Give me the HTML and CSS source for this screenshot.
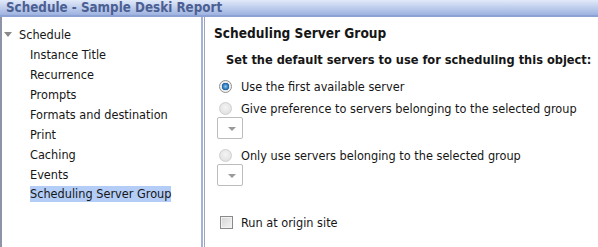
FILE: index.html
```html
<!DOCTYPE html>
<html>
<head>
<meta charset="utf-8">
<link rel="stylesheet" href="styles.css">
</head>
<body>
<div class="titlebar">Schedule - Sample Deski Report</div>
<div class="main">
  <div class="tree">
    <div class="tree-root"><span class="caret"></span><span>Schedule</span></div>
    <div class="tree-item">Instance Title</div>
    <div class="tree-item">Recurrence</div>
    <div class="tree-item">Prompts</div>
    <div class="tree-item">Formats and destination</div>
    <div class="tree-item">Print</div>
    <div class="tree-item">Caching</div>
    <div class="tree-item">Events</div>
    <div class="tree-item"><span class="selected">Scheduling Server Group</span></div>
  </div>
  <div class="content">
    <div class="heading">Scheduling Server Group</div>
    <div class="subheading">Set the default servers to use for scheduling this object:</div>
    <div class="option first"><span class="radio checked"></span><span>Use the first available server</span></div>
    <div class="option"><span class="radio"></span><span>Give preference to servers belonging to the selected group</span></div>
    <div class="select"><span class="arrow"></span></div>
    <div class="option third"><span class="radio"></span><span>Only use servers belonging to the selected group</span></div>
    <div class="select"><span class="arrow"></span></div>
    <div class="option check-row"><span class="checkbox"></span><span>Run at origin site</span></div>
  </div>
</div>
</body>
</html>
```
FILE: styles.css
```css
html, body {
  margin: 0;
  padding: 0;
  background: #fff;
}
body {
  width: 598px;
  height: 247px;
  overflow: hidden;
  font-family: "DejaVu Sans Condensed", "DejaVu Sans", sans-serif;
  font-size: 12.6px;
  color: #161616;
}
.titlebar {
  height: 15px;
  line-height: 15px;
  padding-left: 6px;
  font-size: 13.3px;
  font-weight: bold;
  color: #4c5f93;
  background: linear-gradient(#e2eaf9, #9db2e0);
  border-bottom: 2px solid #8da2d4;
  white-space: nowrap;
}
.main {
  display: flex;
  height: 230px;
}
.tree {
  width: 199px;
  flex: none;
  border-left: 2px solid #8d94a8;
  border-right: 2px solid #a3b2d8;
  padding-top: 7px;
  box-sizing: content-box;
}
.tree-root {
  height: 20px;
  display: flex;
  align-items: center;
  padding-left: 2px;
}
.caret {
  width: 0;
  height: 0;
  border-left: 4px solid transparent;
  border-right: 4px solid transparent;
  border-top: 5px solid #8a8a8a;
  margin-right: 7px;
}
.tree-item {
  height: 20px;
  display: flex;
  align-items: center;
  padding-left: 28px;
  white-space: nowrap;
}
.selected {
  background: #b3cdf7;
  line-height: 16px;
}
.content {
  flex: 1;
  margin-left: 1px;
  border-left: 1px solid #a0a6b8;
  padding-left: 9px;
  padding-top: 8px;
  display: flex;
  flex-direction: column;
  align-items: flex-start;
  white-space: nowrap;
}
.heading {
  font-weight: bold;
  font-size: 13.6px;
  line-height: 16px;
  height: 16px;
}
.subheading {
  font-weight: bold;
  font-size: 12.7px;
  line-height: 16px;
  margin-top: 11px;
  margin-left: 12px;
}
.option {
  display: flex;
  align-items: center;
  height: 16px;
  margin-top: 6px;
  margin-left: 5px;
}
.option.first {
  margin-top: 10px;
}
.option.third {
  margin-top: 8px;
}
.radio {
  width: 13px;
  height: 13px;
  border-radius: 50%;
  box-sizing: border-box;
  border: 1px solid #cfcfcf;
  background: radial-gradient(circle at 50% 40%, #f4f4f4, #dcdcdc);
  margin-right: 9px;
  flex: none;
}
.radio.checked {
  border-color: #8e8f8f;
  background: radial-gradient(circle, #8dc6ec 0, #2d7fc2 2.5px, #1c5d9a 3.5px, #e8e8e8 4px, #fafafa 6px);
}
.select {
  width: 26px;
  height: 22px;
  box-sizing: border-box;
  border: 1px solid #bcbcbc;
  border-radius: 2px;
  margin-left: 3px;
  margin-top: 1px;
  background: #fff;
  position: relative;
}
.arrow {
  position: absolute;
  right: 6px;
  top: 9px;
  width: 0;
  height: 0;
  border-left: 4px solid transparent;
  border-right: 4px solid transparent;
  border-top: 4px solid #9a9a9a;
}
.check-row {
  margin-top: 28px;
  margin-left: 6px;
}
.checkbox {
  width: 13px;
  height: 13px;
  box-sizing: border-box;
  border: 1px solid #8a8a8a;
  background: linear-gradient(135deg, #d4d4d4, #f4f4f4);
  box-shadow: inset 0 0 0 1px #f2f2f2;
  margin-right: 8px;
  flex: none;
}
```
